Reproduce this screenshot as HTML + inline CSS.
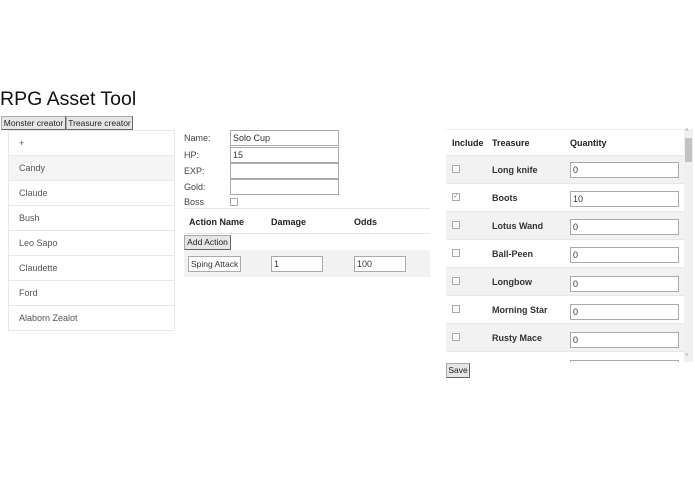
<!DOCTYPE html>
<html><head><style>
body{margin:0;width:695px;height:494px;background:#fff;font-family:"Liberation Sans",sans-serif;color:#222;position:relative;overflow:hidden}
.a{position:absolute}
.btn{position:absolute;background:#e6e6e6;border:1px solid #aaa;border-right-color:#666;border-bottom-color:#666;font-size:8.5px;line-height:12px;padding:0;text-align:center;white-space:nowrap;box-sizing:border-box;height:14px;color:#222}
.inp{position:absolute;border:1px solid #aaa;background:#fff;box-sizing:border-box;font-size:9px;line-height:14px;padding-left:2px;color:#333;white-space:nowrap;overflow:hidden}
.li{position:absolute;left:8px;width:167px;height:26px;border:1px solid #e8e8e8;box-sizing:border-box;font-size:9px;line-height:25px;padding-left:10px;color:#555}
.lbl{position:absolute;left:184px;font-size:9px;color:#444}
.cb{position:absolute;width:6px;height:6px;border:1px solid #aaa;background:#fff}
.th{position:absolute;font-size:9px;font-weight:bold;color:#222}
.row{position:absolute;left:446px;width:238px;height:28px;border-top:1px solid #e6e6e6;box-sizing:border-box}
.tn{position:absolute;left:46px;top:9px;font-size:9px;font-weight:bold;color:#333}
</style></head><body>
<div class="a" style="left:0;top:88px;font-size:19.5px;color:#111">RPG Asset Tool</div>
<div class="btn" style="left:1px;top:116px;width:65px">Monster creator</div>
<div class="btn" style="left:66px;top:116px;width:67px">Treasure creator</div>

<div class="li" style="top:130px">+</div>
<div class="li" style="top:155px;background:#f5f5f5">Candy</div>
<div class="li" style="top:180px">Claude</div>
<div class="li" style="top:205px">Bush</div>
<div class="li" style="top:230px">Leo Sapo</div>
<div class="li" style="top:255px">Claudette</div>
<div class="li" style="top:280px">Ford</div>
<div class="li" style="top:305px">Alaborn Zealot</div>

<div class="lbl" style="top:133px">Name:</div>
<div class="lbl" style="top:150px">HP:</div>
<div class="lbl" style="top:166px">EXP:</div>
<div class="lbl" style="top:182px">Gold:</div>
<div class="lbl" style="top:197px">Boss</div>
<div class="inp" style="left:230px;top:130px;width:109px;height:16px">Solo Cup</div>
<div class="inp" style="left:230px;top:147px;width:109px;height:16px">15</div>
<div class="inp" style="left:230px;top:163px;width:109px;height:16px"></div>
<div class="inp" style="left:230px;top:179px;width:109px;height:16px"></div>
<div class="cb" style="left:230px;top:198px"></div>
<div class="a" style="left:184px;top:208px;width:246px;height:1px;background:#e6e6e6"></div>
<div class="th" style="left:189px;top:217px">Action Name</div>
<div class="th" style="left:271px;top:217px">Damage</div>
<div class="th" style="left:354px;top:217px">Odds</div>
<div class="a" style="left:184px;top:233px;width:246px;height:1px;background:#e6e6e6"></div>
<div class="btn" style="left:184px;top:235px;width:47px;height:15px;line-height:13px">Add Action</div>
<div class="a" style="left:184px;top:250px;width:246px;height:27px;background:#f2f2f2"></div>
<div class="inp" style="left:188px;top:256px;width:53px;height:16px;font-size:8.5px">Sping Attack</div>
<div class="inp" style="left:271px;top:256px;width:52px;height:16px">1</div>
<div class="inp" style="left:354px;top:256px;width:52px;height:16px">100</div>

<div class="a" style="left:446px;top:129px;width:238px;height:1px;background:#eee"></div>
<div class="th" style="left:452px;top:138px">Include</div>
<div class="th" style="left:492px;top:138px">Treasure</div>
<div class="th" style="left:570px;top:138px">Quantity</div>
<div class="row" style="top:155px;background:#f2f2f2"><div class="cb" style="left:6px;top:9px"></div><div class="tn">Long knife</div><div class="inp" style="left:124px;top:6px;width:109px;height:16px">0</div></div>
<div class="row" style="top:183px"><div class="cb" style="left:6px;top:9px;font-size:7px;line-height:6px;color:#888;text-align:center">✓</div><div class="tn">Boots</div><div class="inp" style="left:124px;top:7px;width:109px;height:16px">10</div></div>
<div class="row" style="top:211px;background:#f2f2f2"><div class="cb" style="left:6px;top:9px"></div><div class="tn">Lotus Wand</div><div class="inp" style="left:124px;top:7px;width:109px;height:16px">0</div></div>
<div class="row" style="top:239px"><div class="cb" style="left:6px;top:9px"></div><div class="tn">Ball-Peen</div><div class="inp" style="left:124px;top:7px;width:109px;height:16px">0</div></div>
<div class="row" style="top:267px;background:#f2f2f2"><div class="cb" style="left:6px;top:9px"></div><div class="tn">Longbow</div><div class="inp" style="left:124px;top:8px;width:109px;height:16px">0</div></div>
<div class="row" style="top:295px"><div class="cb" style="left:6px;top:9px"></div><div class="tn">Morning Star</div><div class="inp" style="left:124px;top:8px;width:109px;height:16px">0</div></div>
<div class="row" style="top:323px;background:#f2f2f2"><div class="cb" style="left:6px;top:9px"></div><div class="tn">Rusty Mace</div><div class="inp" style="left:124px;top:8px;width:109px;height:16px">0</div></div>
<div class="row" style="top:351px;height:11px;overflow:hidden"><div class="inp" style="left:124px;top:8px;width:109px;height:16px"></div></div>
<div class="a" style="left:684px;top:129px;width:9px;height:233px;background:#f0f0f0"></div>
<div class="a" style="left:685px;top:138px;width:7px;height:24px;background:#c2c2c2"></div>
<div class="a" style="left:685px;top:128px;font-size:6px;color:#999">˄</div>
<div class="a" style="left:685px;top:353px;font-size:6px;color:#999">˅</div>
<div class="btn" style="left:446px;top:363px;width:24px;height:15px;line-height:13px">Save</div>
</body></html>
